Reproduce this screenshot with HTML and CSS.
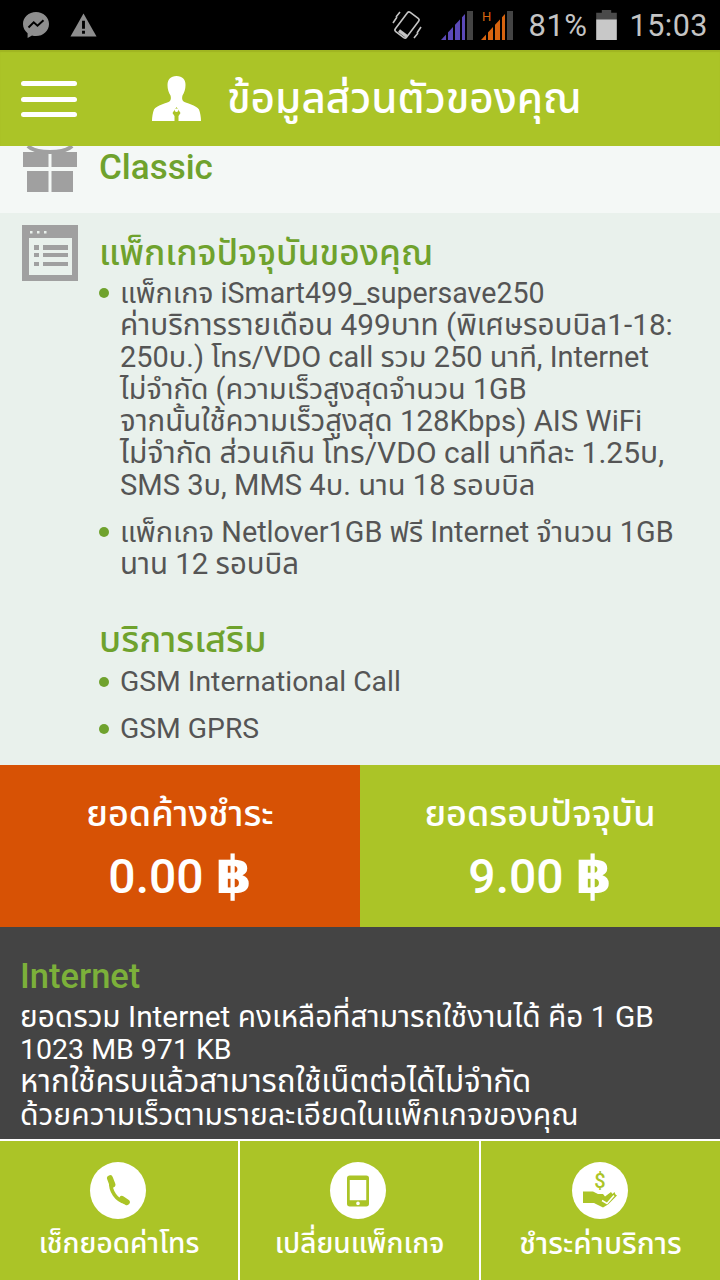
FILE: index.html
```html
<!DOCTYPE html>
<html lang="th">
<head>
<meta charset="utf-8">
<title>ข้อมูลส่วนตัวของคุณ</title>
<link rel="stylesheet" href="styles.css">
</head>
<body>
<div class="screen">
  <div class="status">
    <div class="status-left">
      <svg class="ic-msg" viewBox="0 0 28 28"><path fill="#8e8e8e" d="M14 1C6.800 1 1 6.300 1 13c0 3.700 1.800 7 4.600 9.200V27l4.400-2.500c1.300.4 2.600.6 4 .6 7.200 0 13-5.400 13-12.100S21.200 1 14 1z"/><path fill="none" stroke="#000" stroke-width="2" d="M6.500 16.500l5.200-5.200 3.800 3.400 6-5.400"/></svg>
      <svg class="ic-warn" viewBox="0 0 28 24"><path fill="#8e8e8e" d="M14 0l13.500 24H.5z"/><path fill="#000" d="M12.500 7.500h3v8.500h-3zM12.500 18h3v3h-3z"/></svg>
    </div>
    <div class="status-right">
      <svg class="ic-rot" viewBox="0 0 30 34"><g fill="none" stroke="#c4c4c4" stroke-width="1.600"><rect x="8" y="5" width="14" height="24" rx="2" transform="rotate(37 15 17)"/><path d="M5 9L1 15M25 25l4-6M8 4L4 9M22 30l4-5"/></g><path fill="#c4c4c4" d="M6 24l8 6 2-2.700-8-6z"/></svg>
      <svg class="ic-sig" viewBox="0 0 32 32"><path fill="#5b49b8" d="M0 31L24 5v26z"/><path fill="#000" d="M5 20h2v12H5zM12 12h2v20h-2zM19 5h2v27h-2z"/><path fill="#444" d="M26 2h6v29h-6z"/></svg>
      <svg class="ic-sig" viewBox="0 0 32 32"><path fill="#d8640f" d="M0 31L24 5v26z"/><path fill="#000" d="M5 14h2v18H5zM12 12h2v20h-2zM19 5h2v27h-2zM0 5h13v9H0z"/><path fill="#444" d="M26 2h6v29h-6z"/><text x="1" y="12" class="sig-h">H</text></svg>
      <span class="pct">81%</span>
      <svg class="ic-bat" viewBox="0 0 22 32"><path fill="#4a4a4a" d="M6 0h10v3h6v7H0V3h6z"/><path fill="#c8c8c8" d="M0 10h22v22H0z"/></svg>
      <span class="clock">15:03</span>
    </div>
  </div>

  <header class="topbar">
    <div class="burger"><span></span><span></span><span></span></div>
    <svg class="ic-person" viewBox="0 0 49 45"><path fill="#fff" fill-rule="evenodd" d="M24.500 0c-6 0-9 3.500-9 9 0 4 1.200 7.500 3 10.500.6 2 .5 4-.5 5.500-3 2.500-13.500 4-16 8.500C.8 36.500 0 41 0 45h22.500v-5l-2-3 4-6 4 6-2 3v5H49c0-4-.8-8.500-2-11.500-2.500-4.500-13-6-16-8.500-1-1.500-1.100-3.500-.5-5.500 1.800-3 3-6.500 3-10.500 0-5.500-3-9-9-9zm0 32.500a1.800 1.800 0 1 1 0 3.600 1.800 1.800 0 0 1 0-3.600z"/></svg>
    <h1 class="title">ข้อมูลส่วนตัวของคุณ</h1>
  </header>

  <section class="classic">
    <svg class="ic-gift" viewBox="0 0 54 40"><path fill="none" stroke="#a0a0a0" stroke-width="4" d="M5-6c5 5 15 6 22 6s17-1 22-6"/><path fill="#a0a0a0" d="M0 0h25.500v15H0zM28.500 0H54v15H28.500zM4 19h21.500v21H4zM28.500 19H50v21H28.500z"/></svg>
    <h2 class="classic-name">Classic</h2>
  </section>

  <section class="package">
    <svg class="ic-list" viewBox="0 0 56 56"><path fill="#a0a0a0" d="M0 0h56v56H0z"/><path fill="#e9f1ec" d="M8 6h2.500v2.500H8zM15 6h2.500v2.500H15zM22 6h2.500v2.500H22zM7 13h43v37H7z"/><path fill="#a0a0a0" d="M12 20h5v5h-5zM21 20h25v5H21zM12 28h5v4h-5zM21 28h25v4H21zM12 37h5v4h-5zM21 37h25v4H21z"/></svg>
    <div class="package-body">
      <h2 class="heading">แพ็กเกจปัจจุบันของคุณ</h2>
      <ul class="items">
        <li>
          <span class="ln ln-s">แพ็กเกจ iSmart499_supersave250</span>
          <span class="ln ln-c">ค่าบริการรายเดือน 499บาท (พิเศษรอบบิล1-18:</span>
          <span class="ln ln-e">250บ.) โทร/VDO call รวม 250 นาที, Internet</span>
          <span class="ln">ไม่จำกัด (ความเร็วสูงสุดจำนวน 1GB</span>
          <span class="ln ln-b">จากนั้นใช้ความเร็วสูงสุด 128Kbps) AIS WiFi</span>
          <span class="ln ln-d">ไม่จำกัด ส่วนเกิน โทร/VDO call นาทีละ 1.25บ,</span>
          <span class="ln ln-a">SMS 3บ, MMS 4บ. นาน 18 รอบบิล</span>
        </li>
        <li>
          <span class="ln">แพ็กเกจ Netlover1GB ฟรี Internet จำนวน 1GB</span>
          <span class="ln ln-b">นาน 12 รอบบิล</span>
        </li>
      </ul>
      <h2 class="heading heading-extra">บริการเสริม</h2>
      <ul class="items items-latin">
        <li>GSM International Call</li>
        <li>GSM GPRS</li>
      </ul>
    </div>
  </section>

  <section class="balance">
    <div class="bal bal-due"><div class="bal-label">ยอดค้างชำระ</div><div class="bal-value">0.00 <span class="baht">฿</span></div></div>
    <div class="bal bal-cur"><div class="bal-label">ยอดรอบปัจจุบัน</div><div class="bal-value">9.00 <span class="baht">฿</span></div></div>
  </section>

  <section class="internet">
    <h2 class="net-title">Internet</h2>
    <div class="net-text">
      <span class="nl">ยอดรวม Internet คงเหลือที่สามารถใช้งานได้ คือ 1 GB</span>
      <span class="nl nl-num">1023 MB 971 KB</span>
      <span class="nl nl-wide">หากใช้ครบแล้วสามารถใช้เน็ตต่อได้ไม่จำกัด</span>
      <span class="nl nl-mid">ด้วยความเร็วตามรายละเอียดในแพ็กเกจของคุณ</span>
    </div>
  </section>

  <nav class="footer">
    <div class="tab">
      <span class="circle"><svg class="ic-call" viewBox="0 0 32 40"><g fill="none" stroke="#abc427" stroke-linecap="round"><path stroke-width="4.500" d="M7 8C6 20 14 32 25 34"/><path stroke-width="7.500" d="M6 4l3 8M21 30l6 4"/></g></svg></span>
      <span class="tab-label">เช็กยอดค่าโทร</span>
    </div>
    <div class="tab">
      <span class="circle"><svg class="ic-phone" viewBox="0 0 24 34"><path fill="#abc427" fill-rule="evenodd" d="M3 0h18a3 3 0 0 1 3 3v28a3 3 0 0 1-3 3H3a3 3 0 0 1-3-3V3a3 3 0 0 1 3-3zm0 5v22h18V5zm9 23.500a2 2 0 1 0 0 4 2 2 0 0 0 0-4z"/></svg></span>
      <span class="tab-label">เปลี่ยนแพ็กเกจ</span>
    </div>
    <div class="tab">
      <span class="circle"><svg class="ic-pay" viewBox="0 0 34 44"><text x="17" y="19" class="dollar">$</text><g transform="translate(0 4.500)"><path fill="#abc427" d="M0 18h10l5 2.500h5l2 2.500 6-4.500 1.500 2 2-2 1 2.500 1.500 1-9 9-5 3-9-4.500H0z"/><path fill="none" stroke="#fff" stroke-width="1.500" d="M19 27l5 3 7-8"/></g></svg></span>
      <span class="tab-label tab-label-wide">ชำระค่าบริการ</span>
    </div>
  </nav>
</div>
</body>
</html>
```
FILE: styles.css
```css
* { box-sizing: border-box; }
html, body { margin: 0; padding: 0; }
body { font-family: Roboto, "Noto Sans", "Noto Sans Thai", "Liberation Sans", sans-serif; }
h1, h2, p, ul { margin: 0; padding: 0; }
.screen { width: 720px; height: 1280px; overflow: hidden; display: flex; flex-direction: column; background: #e9f1ec; }

.status { height: 50px; background: #000; display: flex; justify-content: space-between; align-items: center; padding: 0 12px 0 22px; flex: none; }
.status-left, .status-right { display: flex; align-items: center; }
.ic-msg { width: 28px; height: 28px; margin-right: 20px; }
.ic-warn { width: 27px; height: 24px; }
.ic-rot { width: 30px; height: 34px; margin-right: 19px; }
.ic-sig { width: 32px; height: 32px; margin-right: 8px; }
.sig-h { font-size: 13px; fill: #d8640f; font-family: Roboto, sans-serif; }
.pct, .clock { color: #c4c4c4; font-size: 30.500px; letter-spacing: 0.5px; }
.pct { font-size: 31px; margin-left: 7px; margin-right: 8px; }
.ic-bat { width: 21px; height: 30px; margin-right: 13px; }

.topbar { height: 96px; background: #abc427; display: flex; align-items: center; padding-left: 21px; flex: none; box-shadow: inset 0 2px 1px #a0b522; }
.burger { width: 56px; display: flex; flex-direction: column; gap: 10.500px; margin: 2px 75px 0 0; }
.burger span { height: 5px; border-radius: 3px; background: #fff; }
.ic-person { width: 49px; height: 45px; margin-right: 26px; }
.title { font-size: 42.200px; font-weight: 500; color: #fff; line-height: 46px; margin-top: 2px; }

.classic { height: 67px; background: #f4f8f6; display: flex; padding: 6px 0 0 23px; flex: none; overflow: hidden; }
.ic-gift { width: 54px; height: 40px; overflow: visible; flex: none; }
.classic-name { font-size: 35px; font-weight: 500; color: #6fa22d; margin: -5px 0 0 22px; line-height: 42px; }

.package { height: 552px; display: flex; padding: 12px 0 0 22px; flex: none; }
.ic-list { width: 56px; height: 56px; flex: none; }
.package-body { margin-left: 21px; }
.heading { font-size: 35.200px; font-weight: 500; color: #6fa22d; line-height: 47px; margin-top: 5px; white-space: nowrap; }
.heading-extra { margin-top: 34px; line-height: 52px; font-size: 36.200px; }
.items { list-style: none; }
.items li { position: relative; padding-left: 21px; font-size: 28.800px; line-height: 32px; color: #555; margin-bottom: 15px; white-space: nowrap; }
.items li::before { content: ""; position: absolute; left: 0; top: 11px; width: 10px; height: 10px; border-radius: 50%; background: #6fa22d; }
.items-latin li { font-size: 28.300px; }
.ln { display: block; height: 32px; }
.ln-s { font-size: 28.600px; }
.ln-e { font-size: 28.950px; }
.ln-a { font-size: 29.100px; }
.ln-b { font-size: 29.400px; }
.ln-c { font-size: 29.700px; }
.ln-d { font-size: 30px; }

.balance { height: 162px; display: flex; flex: none; }
.bal { width: 360px; color: #fff; text-align: center; font-weight: 500; }
.bal-due { background: #d75205; }
.bal-cur { background: #abc427; }
.bal-label { font-size: 36px; line-height: 40px; margin-top: 29px; white-space: nowrap; }
.bal-value { font-size: 48px; line-height: 54px; margin-top: 16px; height: 54px; }
.baht { font-family: "DejaVu Sans", sans-serif; font-weight: 700; font-size: 52px; line-height: 0; }

.internet { height: 212px; background: #444; padding: 25px 20px 0; flex: none; }
.net-title { font-size: 34.500px; font-weight: 500; color: #7cb03a; line-height: 49px; }
.net-text { font-size: 29.800px; line-height: 32.500px; color: #fff; white-space: nowrap; }
.nl { display: block; height: 32.500px; }
.nl-num { font-size: 28.500px; }
.nl-wide { font-size: 31.200px; }
.nl-mid { font-size: 30.100px; }

.footer { height: 141px; flex: none; display: grid; grid-template-columns: 238px 241px 241px; background: #abc427; border-top: 2px solid #fff; }
.tab { display: flex; flex-direction: column; align-items: center; padding-top: 21px; color: #fff; border-left: 2px solid #fff; }
.tab:first-child { border-left: 0; }
.circle { width: 56px; height: 57px; border-radius: 50%; background: #fff; display: flex; align-items: center; justify-content: center; margin-right: 2px; }
.tab:nth-child(2) .circle { margin-right: 3px; }
.tab:nth-child(3) .circle { margin-right: 1px; }
.ic-call { width: 26px; height: 32px; }
.ic-phone { width: 22px; height: 32px; }
.ic-pay { width: 34px; height: 44px; }
.dollar { font-size: 20px; fill: #abc427; font-family: Roboto, sans-serif; text-anchor: middle; font-weight: 500; }
.tab-label { font-size: 28px; font-weight: 500; line-height: 36px; margin-top: 7px; white-space: nowrap; }
.tab-label-wide { font-size: 29.600px; }
```
